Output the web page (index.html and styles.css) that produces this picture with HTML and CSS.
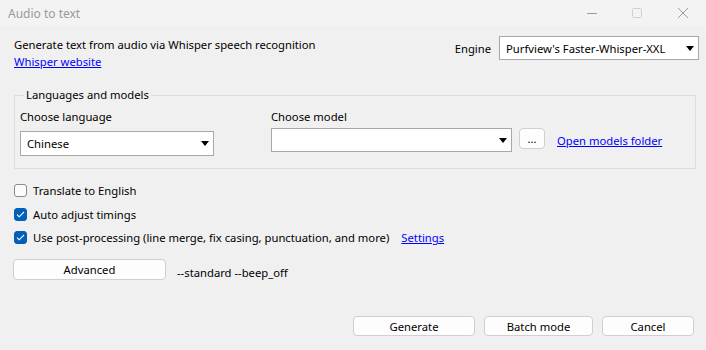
FILE: index.html
```html
<!DOCTYPE html>
<html>

<head>
  <link rel="stylesheet" href="styles.css">
</head>

<body>
  <div class="window">
    <div class="titlebar">
      <span class="title">Audio to text</span>
      <div class="controls">
        <svg class="ctl" width="46" height="26" viewBox="0 0 46 26"><path d="M19 13.5h10" stroke="#9a9a9a" stroke-width="1"/></svg>
        <svg class="ctl" width="46" height="26" viewBox="0 0 46 26"><rect x="18.5" y="8.5" width="9" height="9" rx="1" fill="none" stroke="#d0d0d0"/></svg>
        <svg class="ctl" width="46" height="26" viewBox="0 0 46 26"><path d="M18 8l10 10M28 8l-10 10" stroke="#9a9a9a" stroke-width="1"/></svg>
      </div>
    </div>

    <div class="header">
      <div class="intro">
        <div>Generate text from audio via Whisper speech recognition</div>
        <a class="link" href="#">Whisper website</a>
      </div>
      <div class="engine">
        <span>Engine</span>
        <div class="select engine-select">
          <span>Purfview's Faster-Whisper-XXL</span>
          <svg width="8" height="5" viewBox="0 0 8 5"><path d="M0 0h8L4 5z" fill="#000"/></svg>
        </div>
      </div>
    </div>

    <fieldset class="group">
      <legend>Languages and models</legend>
      <div class="group-row">
        <div class="col lang-col">
          <div class="label">Choose language</div>
          <div class="select lang-select">
            <span>Chinese</span>
            <svg width="8" height="5" viewBox="0 0 8 5"><path d="M0 0h8L4 5z" fill="#000"/></svg>
          </div>
        </div>
        <div class="col model-col">
          <div class="label">Choose model</div>
          <div class="model-row">
            <div class="select model-select">
              <span></span>
              <svg width="8" height="5" viewBox="0 0 8 5"><path d="M0 0h8L4 5z" fill="#000"/></svg>
            </div>
            <button class="btn dots">...</button>
            <a class="link folder" href="#">Open models folder</a>
          </div>
        </div>
      </div>
    </fieldset>

    <div class="options">
      <label class="check"><span class="box"></span>Translate to English</label>
      <label class="check"><span class="box on"><svg width="9" height="7" viewBox="0 0 9 7"><path d="M1 3.6l2.2 2.2L8 1" fill="none" stroke="#fff" stroke-width="1.1"/></svg></span>Auto adjust timings</label>
      <label class="check"><span class="box on"><svg width="9" height="7" viewBox="0 0 9 7"><path d="M1 3.6l2.2 2.2L8 1" fill="none" stroke="#fff" stroke-width="1.1"/></svg></span>Use post-processing (line merge, fix casing, punctuation, and more)<a class="link settings" href="#">Settings</a></label>
    </div>

    <div class="advanced">
      <button class="btn adv">Advanced</button>
      <span class="params">--standard --beep_off</span>
    </div>

    <div class="footer">
      <button class="btn gen">Generate</button>
      <button class="btn batch">Batch mode</button>
      <button class="btn cancel">Cancel</button>
    </div>
  </div>
</body>

</html>
```

FILE: styles.css
```css
body {
  margin: 0;
  background: #f0f0f0;
  font-family: "Segoe UI", "Noto Sans", sans-serif;
  font-size: 11.25px;
  color: #000;
}

.window {
  width: 706px;
  height: 350px;
  display: flex;
  flex-direction: column;
  overflow: hidden;
}

.titlebar {
  height: 26px;
  display: flex;
  align-items: center;
  justify-content: space-between;
  background: #f3f3f3;
}

.title {
  padding-left: 8px;
  color: #9a9a9a;
  font-size: 12px;
}

.controls {
  display: flex;
}

.ctl {
  display: block;
}

.link {
  color: #0000ff;
  text-decoration: underline;
}

.header {
  margin: 10px 7px 0 14px;
  display: flex;
  justify-content: space-between;
  align-items: flex-start;
}

.intro {
  line-height: 17px;
}

.engine {
  display: flex;
  align-items: center;
  gap: 8px;
}

.select {
  display: flex;
  align-items: center;
  justify-content: space-between;
  background: #fff;
  border: 1px solid #a8a8a8;
  box-sizing: border-box;
  padding: 0 4px 0 6px;
}

.engine-select {
  width: 200px;
  height: 24px;
}

.group {
  margin: 18px 10px 0 14px;
  padding: 7px 5px 12px 5px;
  border: 1px solid #dcdcdc;
  min-width: 0;
}

.group legend {
  padding: 0 2px;
  margin-left: 4px;
  line-height: 14px;
}

.group-row {
  display: flex;
}

.label {
  line-height: 15px;
}

.lang-col {
  width: 251px;
}

.lang-select {
  width: 194px;
  height: 25px;
  margin-top: 7px;
}

.model-row {
  display: flex;
  align-items: center;
  margin-top: 4px;
}

.model-select {
  width: 241px;
  height: 24px;
}

.btn {
  font: inherit;
  color: #000;
  background: #fdfdfd;
  border: 1px solid #d0d0d0;
  border-radius: 4px;
  box-sizing: border-box;
  padding: 0;
}

.dots {
  width: 26px;
  height: 21px;
  margin-left: 7px;
  margin-bottom: 3px;
  line-height: 10px;
}

.folder {
  margin-left: 12px;
}

.options {
  margin: 10px 0 0 14px;
  display: flex;
  flex-direction: column;
}

.check {
  display: flex;
  align-items: center;
  height: 23.5px;
}

.box {
  width: 13px;
  height: 13px;
  box-sizing: border-box;
  border: 1px solid #8a8a8a;
  border-radius: 3px;
  background: #fbfbfb;
  margin-right: 6px;
  display: flex;
  align-items: center;
  justify-content: center;
}

.box.on {
  background: #005fb8;
  border-color: #005fb8;
}

.settings {
  margin-left: 12px;
}

.advanced {
  margin: 9px 0 0 13px;
  display: flex;
  align-items: center;
}

.adv {
  width: 153px;
  height: 21px;
}

.params {
  margin-left: 11px;
  margin-top: 6px;
}

.footer {
  margin-top: auto;
  margin-bottom: 14px;
  padding-right: 12px;
  display: flex;
  justify-content: flex-end;
  gap: 9px;
}

.footer .btn {
  height: 20px;
}

.gen {
  width: 122px;
}

.batch {
  width: 109px;
}

.cancel {
  width: 92px;
}
```
